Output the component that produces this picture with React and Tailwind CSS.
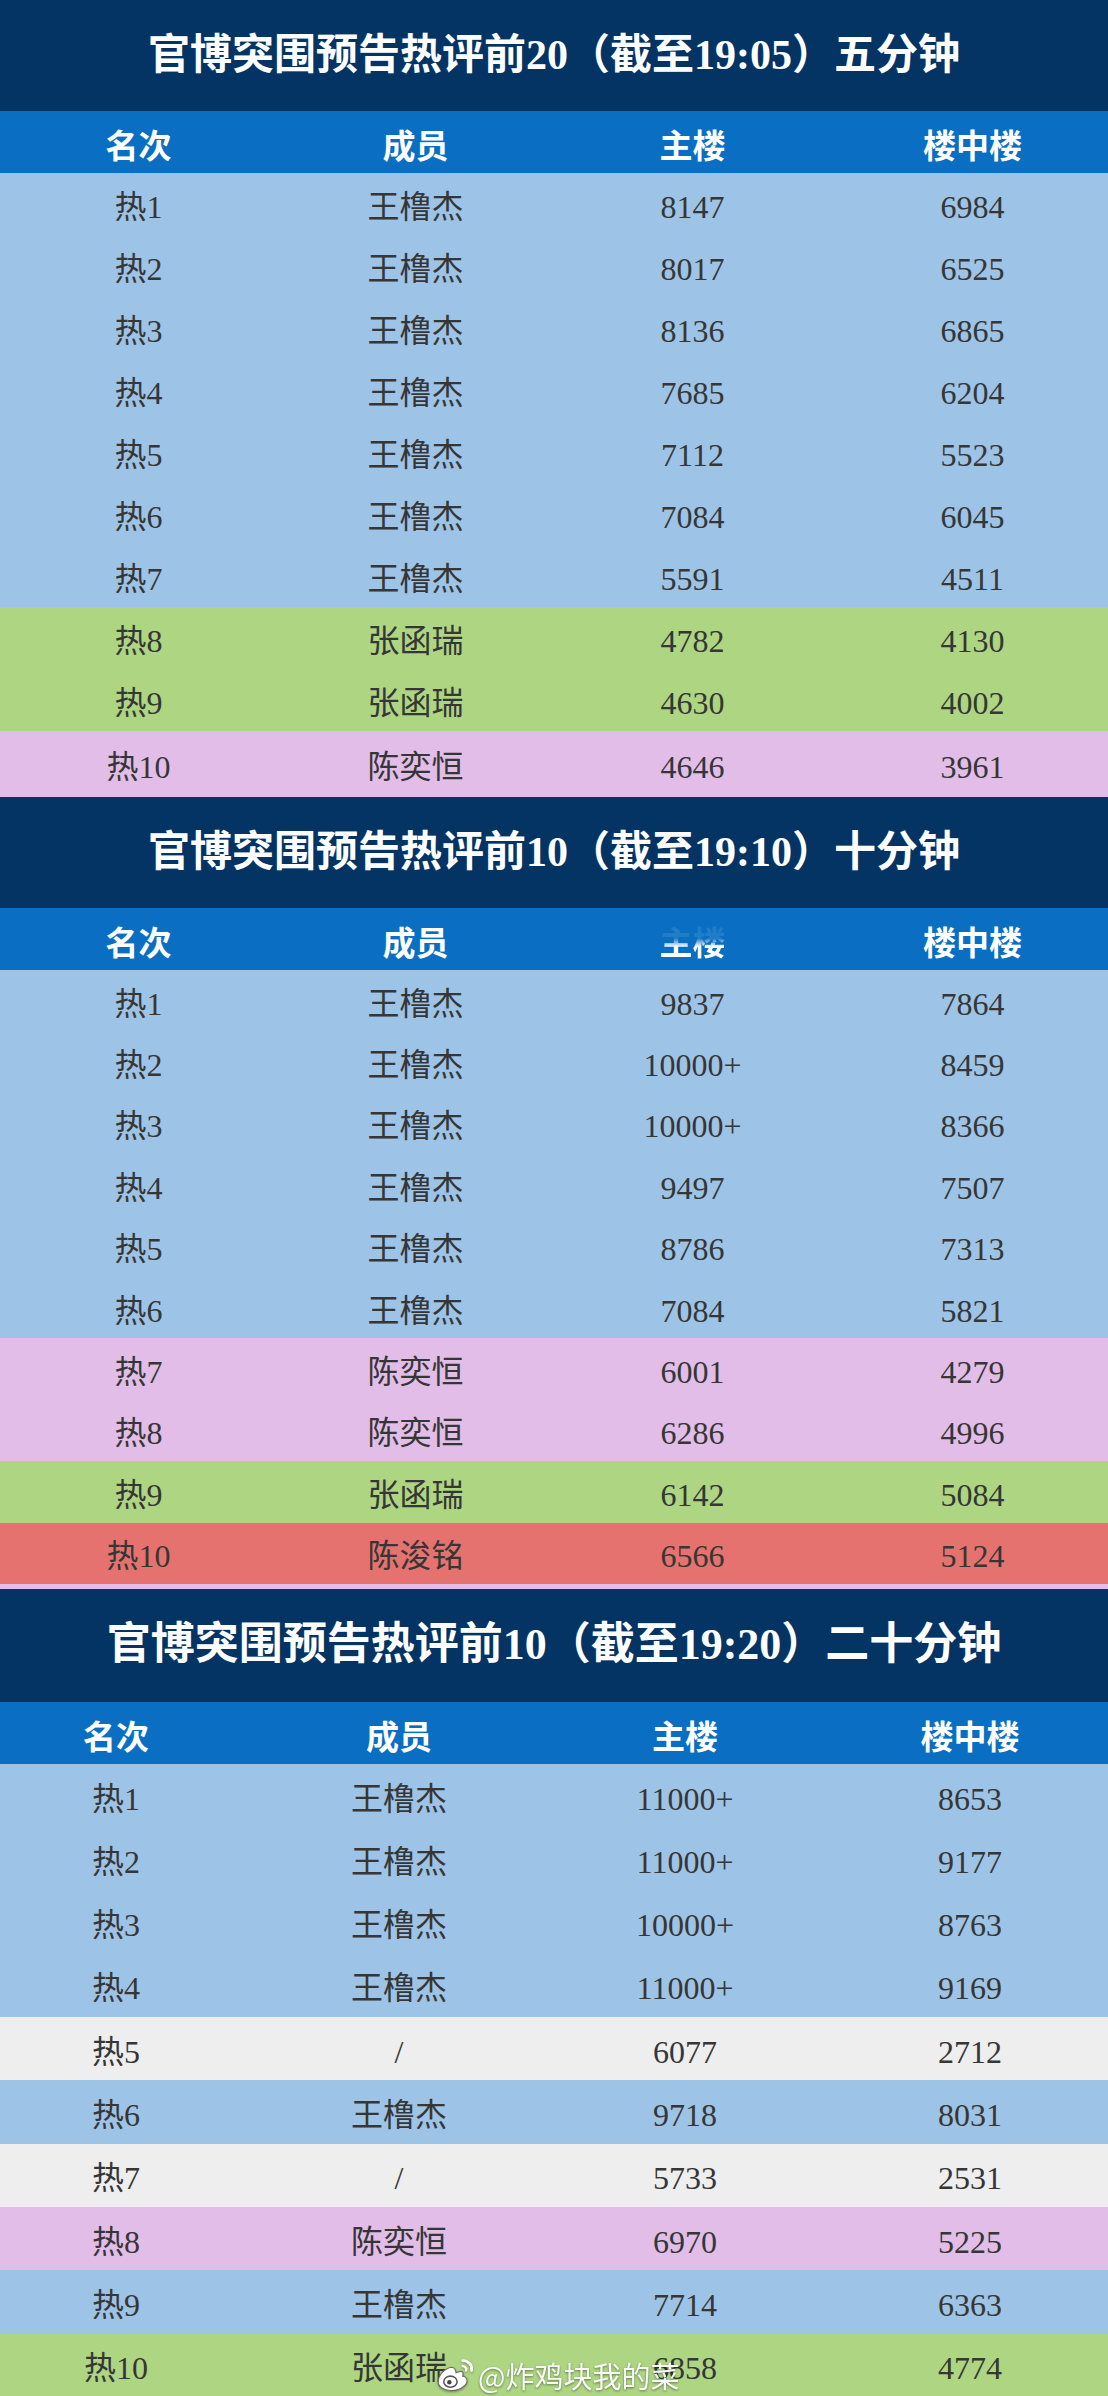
import React from "react";

const FONT = {
  fontFamily: '"Liberation Serif", "Noto Sans CJK SC", serif',
};
const HEAD_FONT = {
  fontFamily: '"Noto Sans CJK SC", "Liberation Sans", sans-serif',
};

const ROW_BG = {
  blue: "bg-[#9dc3e6]",
  green: "bg-[#add582]",
  pink: "bg-[#e2bde8]",
  red: "bg-[#e6726f]",
  grey: "bg-[#eeeeee]",
};

const table1 = [
  ["热1", "王橹杰", "8147", "6984", "blue"],
  ["热2", "王橹杰", "8017", "6525", "blue"],
  ["热3", "王橹杰", "8136", "6865", "blue"],
  ["热4", "王橹杰", "7685", "6204", "blue"],
  ["热5", "王橹杰", "7112", "5523", "blue"],
  ["热6", "王橹杰", "7084", "6045", "blue"],
  ["热7", "王橹杰", "5591", "4511", "blue"],
  ["热8", "张函瑞", "4782", "4130", "green"],
  ["热9", "张函瑞", "4630", "4002", "green"],
  ["热10", "陈奕恒", "4646", "3961", "pink"],
];

const table2 = [
  ["热1", "王橹杰", "9837", "7864", "blue"],
  ["热2", "王橹杰", "10000+", "8459", "blue"],
  ["热3", "王橹杰", "10000+", "8366", "blue"],
  ["热4", "王橹杰", "9497", "7507", "blue"],
  ["热5", "王橹杰", "8786", "7313", "blue"],
  ["热6", "王橹杰", "7084", "5821", "blue"],
  ["热7", "陈奕恒", "6001", "4279", "pink"],
  ["热8", "陈奕恒", "6286", "4996", "pink"],
  ["热9", "张函瑞", "6142", "5084", "green"],
  ["热10", "陈浚铭", "6566", "5124", "red"],
];

const table3 = [
  ["热1", "王橹杰", "11000+", "8653", "blue"],
  ["热2", "王橹杰", "11000+", "9177", "blue"],
  ["热3", "王橹杰", "10000+", "8763", "blue"],
  ["热4", "王橹杰", "11000+", "9169", "blue"],
  ["热5", "/", "6077", "2712", "grey"],
  ["热6", "王橹杰", "9718", "8031", "blue"],
  ["热7", "/", "5733", "2531", "grey"],
  ["热8", "陈奕恒", "6970", "5225", "pink"],
  ["热9", "王橹杰", "7714", "6363", "blue"],
  ["热10", "张函瑞", "6858", "4774", "green"],
];

// weibo eye logo, roughly traced
const WeiboLogo = () => (
  <svg width="40" height="36" viewBox="0 0 36 32" className="drop-shadow-[0_1px_1px_rgba(0,0,0,0.35)]">
    <path
      d="M14 9c-6 1-12 7-12 13 0 5 6 8 12 8 8 0 14-5 14-9 0-3-3-4-4-4 1-3 0-5-3-4l-3 1c0-3-2-5-4-5z"
      fill="#fff"
      stroke="#6b6b6b"
      strokeWidth="1"
    />
    <ellipse cx="13" cy="22" rx="6" ry="5" fill="#fff" stroke="#555" strokeWidth="1.4" />
    <circle cx="12" cy="22.5" r="2" fill="#444" />
    <path d="M24 3c5 0 9 4 8 9" fill="none" stroke="#fff" strokeWidth="2.5" strokeLinecap="round" />
    <path d="M24 8c2 0 4 2 3 4" fill="none" stroke="#fff" strokeWidth="2.2" strokeLinecap="round" />
  </svg>
);

const Title = ({ text, h }) => (
  <div
    className={`${h} bg-[#033464] flex items-center justify-center text-white font-bold text-[42px]`}
    style={FONT}
  >
    {text}
  </div>
);

const Header = ({ cols, cells, blurMain }) => (
  <div className={`grid ${cols} h-[62px] bg-[#0a6fc2] items-center text-white font-bold text-[33px] pt-[5px]`} style={HEAD_FONT}>
    <div className={`text-center ${cells[0]}`}>名次</div>
    <div className={`text-center ${cells[1]}`}>成员</div>
    {blurMain ? (
      <div className={`text-center ${cells[2]}`}>
        <span className="bg-[linear-gradient(to_bottom,rgba(255,255,255,0.1)_45%,#ffffff_62%)] bg-clip-text text-transparent blur-[0.6px]">
          主楼
        </span>
      </div>
    ) : (
      <div className={`text-center ${cells[2]}`}>主楼</div>
    )}
    <div className={`text-center ${cells[3]}`}>楼中楼</div>
  </div>
);

const Table = ({ title, titleH, rows, rowH, lastRowH, cols, cells, blurMain, watermark }) => (
  <div>
    <Title text={title} h={titleH} />
    <Header cols={cols} cells={cells} blurMain={blurMain} />
    {rows.map((r, i) => (
      <div
        key={i}
        className={`relative grid ${cols} items-center text-[32px] text-[#363636] pt-[6px] ${ROW_BG[r[4]]} ${
          i === rows.length - 1 && lastRowH ? lastRowH : rowH
        }`}
        style={FONT}
      >
        <div className={`text-center ${cells[0]}`}>{r[0]}</div>
        <div className={`text-center ${cells[1]}`}>{r[1]}</div>
        <div className={`text-center ${cells[2]}`}>{r[2]}</div>
        <div className={`text-center ${cells[3]}`}>{r[3]}</div>
        {watermark && i === rows.length - 1 && (
          <div className="absolute left-[436px] top-[20px] flex items-center gap-[2px]">
            <WeiboLogo />
            <span
              className="text-white/95 text-[29px] drop-shadow-[0_1px_1px_rgba(0,0,0,0.45)]"
              style={HEAD_FONT}
            >
              @炸鸡块我的菜
            </span>
          </div>
        )}
      </div>
    ))}
  </div>
);

export default function App() {
  const equalCols = "grid-cols-4";
  const equalCells = ["", "", "", "pl-[6px]"];
  return (
    <div className="w-[1108px] bg-white">
      <Table
        title="官博突围预告热评前20（截至19:05）五分钟"
        titleH="h-[111px]"
        rows={table1}
        rowH="h-[62px]"
        lastRowH="h-[66px]"
        cols={equalCols}
        cells={equalCells}
      />
      <Table
        title="官博突围预告热评前10（截至19:10）十分钟"
        titleH="h-[111px]"
        rows={table2}
        rowH="h-[61.4px]"
        cols={equalCols}
        cells={equalCells}
        blurMain
      />
      <div className="h-[5px] bg-[#e2bde8]" />
      <Table
        title="官博突围预告热评前10（截至19:20）二十分钟"
        titleH="h-[113px] text-[44px]"
        rows={table3}
        rowH="h-[63.3px]"
        cols="grid-cols-[232px_334px_238px_1fr]"
        cells={["", "", "", "pl-[28px]"]}
        watermark
      />
    </div>
  );
}
